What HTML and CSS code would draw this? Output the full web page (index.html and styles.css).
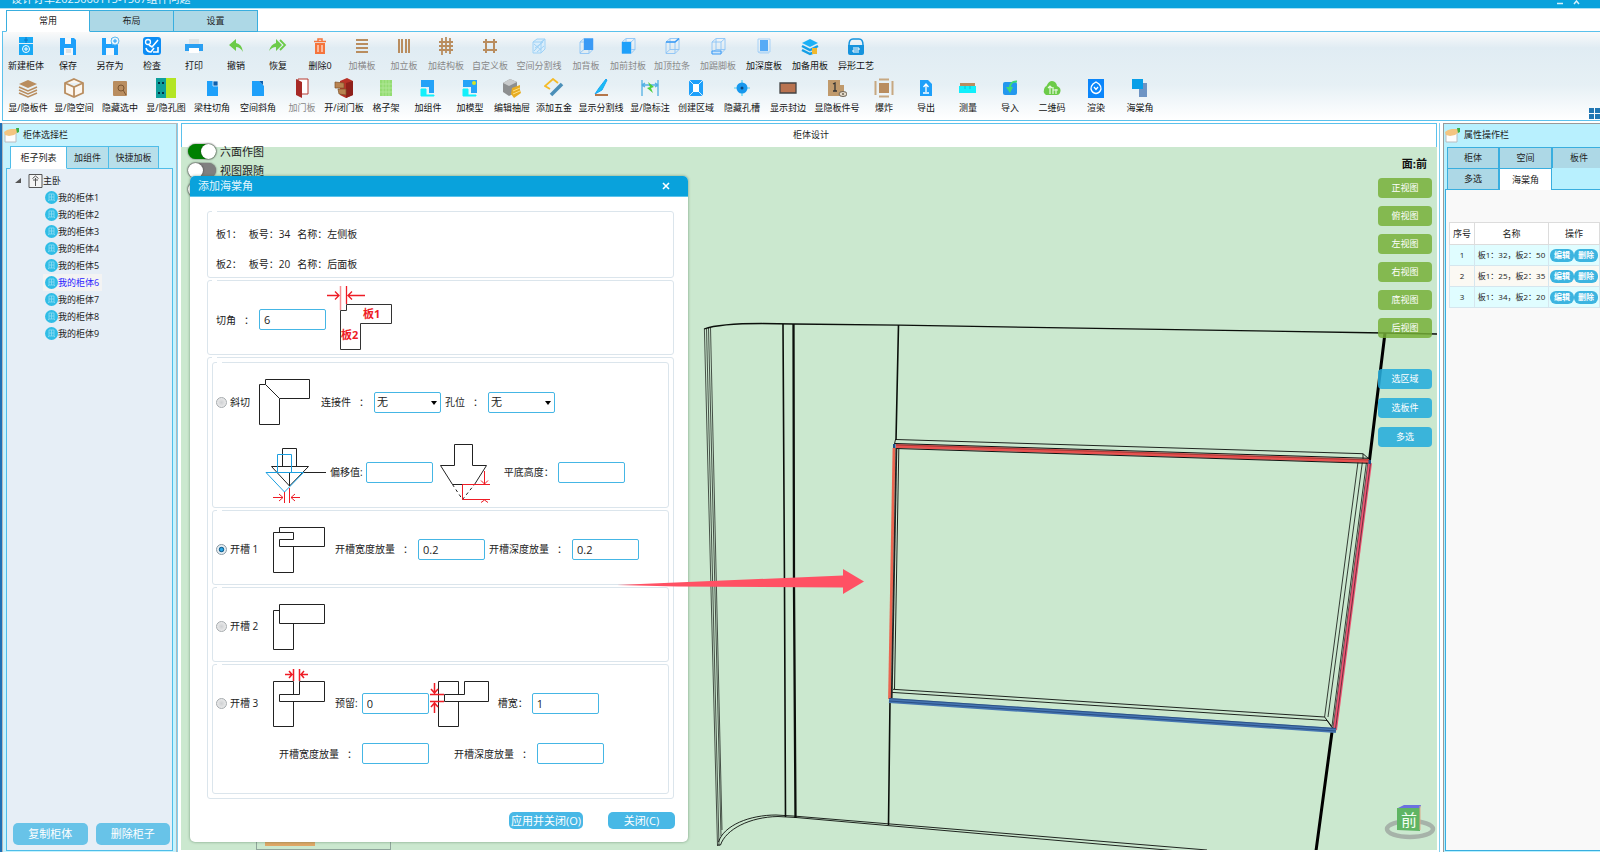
FILE: index.html
```html
<!DOCTYPE html>
<html lang="zh-CN">
<head>
  <meta charset="UTF-8" />
  <meta name="viewport" content="width=device-width, initial-scale=1" />
  <title>柜体设计</title>
  <link rel="stylesheet" href="styles.css">
</head>
<body>
  <header class="titlebar">
    <span>设计订单2025060115-1507组件问题</span>
    <svg class="win-btns" width="26" height="8" viewBox="0 0 26 8"><path d="M0 4.500H6M17 5L19.500 2L22 5" stroke="#d6f1fb" stroke-width="1.500" fill="none"/></svg>
  </header>

  <nav class="ribbon-tabs">
    <button class="active">常用</button>
    <button>布局</button>
    <button>设置</button>
  </nav>

  <section class="ribbon">
    <div class="tools" id="tools-1"></div>
    <div class="tools" id="tools-2"></div>
    <svg class="corner" width="11" height="11" viewBox="0 0 11 11"><path d="M0 0H5V5H0ZM6 0H11V5H6ZM0 6H5V11H0ZM6 6H11V11H6Z" fill="#2277b3"/></svg>
  </section>

  <main class="workspace">
    <aside class="sidebar">
      <h2 class="panel-title">
        <svg width="16" height="16" viewBox="0 0 16 16"><path d="M1 6H12V15H1Z" fill="#fdfdfd" stroke="#b9bcc0"/><path d="M0 5L3 3L7 2L13 2L14 5L10 8L5 9L1 8Z" fill="#f3c581"/><path d="M12 1L15 1V5L13 6Z" fill="#3aae45"/></svg>
        柜体选择栏
      </h2>
      <nav class="side-tabs">
        <button class="active">柜子列表</button>
        <button>加组件</button>
        <button>快捷加板</button>
      </nav>
      <div class="side-body">
        <div class="tree-root">
          <svg width="28" height="14" viewBox="0 0 28 14"><path d="M6 4V9H0Z" fill="#555"/><path d="M14 .500H27V13.500H14Z" fill="#f4f4f4" stroke="#555"/><path d="M20.500 4V12M17.500 4.500L20.500 2L23.500 4.500M18 6H23" stroke="#555" fill="none"/></svg>
          主卧
        </div>
        <ul class="tree" id="tree"></ul>
        <div class="side-actions">
          <button>复制柜体</button>
          <button>删除柜子</button>
        </div>
      </div>
    </aside>

    <section class="design">
      <h2 class="design-title">柜体设计</h2>
      <div class="canvas">
        <svg class="model" viewBox="181 147 1256 703" preserveAspectRatio="xMinYMin slice">
          <g fill="none" stroke="#0b0f0b">
            <g stroke-width="1.300">
              <path d="M704 329C715 325 740 323.500 762 323.500L793 324L899 325.200L1385 333L1438 334"/>
              <path d="M898.500 325L896 440M890 701L888.500 825" stroke-width="1.600"/>
            </g>
            <path d="M783 324L784.500 587L785.500 817" stroke-width="1.600"/>
            <path d="M793.500 324L794 587L795.500 818" stroke-width="2.300"/>
            <path d="M704.400 329L717.500 846M706.500 328.500L719 846M708.500 328L721 836M710.500 327.500L722 830" stroke-width=".7"/>
            <path d="M717.500 845H720.500C726 829 750 817 778 816.500L796 817.500L1178 851M718.500 842C724 825 750 815 776 815L793 816L1207 850" stroke-width=".9"/>
            <path d="M1385 333L1369.500 460M1332 732L1316 851" stroke-width="3" stroke="#000"/>
            <path d="M893.500 448L895.500 439.500L1363 453.700L1369 459L1370 463" stroke-width=".9"/>
            <path d="M1358 462L1324.600 717M1362.400 462L1328 717M1366.500 462L1332 726" stroke-width=".8"/>
            <path d="M898.800 449L894.500 689M893 689.300L1324.600 717L1333 728M892 692.400L1327 720.500L1333 729M1363 454L1363 460" stroke-width=".9"/>
          </g>
          <path d="M896 446L1369 461" stroke="#e85250" stroke-width="4"/>
          <path d="M895 443.500L1369 458.300M896 448.500L1369 463.300" stroke="#111" stroke-width="1"/>
          <path d="M896 445L1369 460" stroke="#8c2f2c" stroke-width=".7"/>
          <path d="M894 448L889.500 699" stroke="#ea6550" stroke-width="2.800"/>
          <path d="M896.400 448L891.700 698" stroke="#222" stroke-width="1.800"/>
          <path d="M1370 463L1335 730" stroke="#ed5573" stroke-width="4"/>
          <path d="M1367.800 463L1332.800 729M1370.500 463L1335.500 729" stroke="#4c2731" stroke-width=".8"/>
          <path d="M889 700.500L1336 730.500" stroke="#4676b2" stroke-width="5"/>
          <path d="M889 698.500L1336 728.500M889 701L1336 731" stroke="#1e3f72" stroke-width=".7"/>
          <path d="M893 444H895.500V448H893ZM1368.500 460H1371V464H1368.500Z" fill="#1f4d86"/>
          <ellipse cx="1410" cy="829" rx="23" ry="8" fill="none" stroke="#a6b3a9" stroke-width="4.500"/>
          <path d="M1398 808L1404 805H1421L1420 808Z" fill="#6b71e0"/>
          <path d="M1397 808H1420V831L1397 830Z" fill="#5fb564"/>
          <path d="M1420 806V830" stroke="#dfa989"/>
          <text x="1401" y="826" class="cube-text">前</text>
        </svg>

        <div class="toggles">
          <label><input type="checkbox" checked> 六面作图</label>
          <label><input type="checkbox"> 视图跟随</label>
          <label><input type="checkbox"></label>
        </div>

        <div class="view-panel">
          <p>面:前</p>
          <div class="views">
            <button>正视图</button>
            <button>俯视图</button>
            <button>左视图</button>
            <button>右视图</button>
            <button>底视图</button>
            <button>后视图</button>
          </div>
          <div class="picks">
            <button>选区域</button>
            <button>选板件</button>
            <button>多选</button>
          </div>
        </div>

        <div class="legend-box"><i></i></div>

        <form class="dialog" onsubmit="return false">
          <div class="dialog-title">
            <span>添加海棠角</span>
            <button type="button" aria-label="关闭"><svg width="8" height="8" viewBox="0 0 8 8"><path d="M1 1L7 7M7 1L1 7" stroke="#fff" stroke-width="1.600"/></svg></button>
          </div>
          <div class="dialog-body">
            <fieldset class="boards">
              <p><span>板1<i class="fw">：</i></span><span>板号<i class="fw">：</i>34</span><span>名称<i class="fw">：</i>左侧板</span></p>
              <p><span>板2<i class="fw">：</i></span><span>板号<i class="fw">：</i>20</span><span>名称<i class="fw">：</i>后面板</span></p>
            </fieldset>

            <fieldset class="cut">
              <label for="cut">切角<i class="fw colon">：</i></label>
              <input type="text" id="cut" value="6">
              <svg width="67" height="69" viewBox="0 2 67 69" fill="none">
                <path d="M14.500 27.500H20.500V21.500H65.500V40.500H34.500V66.500H14.500Z" stroke="#333"/>
                <path d="M14.500 3V27" stroke="#f78d92" stroke-width="1.500"/>
                <path d="M20.500 3V21M1 12.500H13M9 8.500L13 12.500L9 16.500M39 12.500H22M26 8.500L22 12.500L26 16.500" stroke="#ee1c25" stroke-width="1.300"/>
                <text x="37" y="35">板1</text>
                <text x="15" y="56">板2</text>
              </svg>
            </fieldset>

            <fieldset class="modes">
              <fieldset class="mode miter">
                <div class="line">
                  <label class="opt"><input type="radio" name="mode"> 斜切</label>
                  <svg width="57" height="48" viewBox="0 0 57 48" class="ink"><path d="M9.500 6.500V1.500H53.500V20.500H23.500L9.500 6.500H3.500V46.500H23.500V20.500"/></svg>
                  <label class="after-pic" for="joint">连接件<i class="fw colon">：</i></label>
                  <span class="select"><select id="joint"><option>无</option></select></span>
                  <label class="next" for="hole">孔位<i class="fw colon">：</i></label>
                  <span class="select"><select id="hole"><option>无</option></select></span>
                </div>
                <div class="line second">
                  <svg width="61" height="62" viewBox="0 0 61 62" class="ink">
                    <path d="M17.500 25.500V7.500H31.500V25.500M6.500 25.500H43.500L24.500 45L6.500 25.500M24.500 31V45M38 31.500H61"/>
                    <path d="M12.500 31.500V13.500H26.500V31.500M1 31.500H38.500L19.500 51Z" stroke="#1c9fe0"/>
                    <path d="M19.500 51V62M24.500 47V62M8 56.500H18M14 53L18 56.500L14 60M35 56.500H26M30 53L26 56.500L30 60" stroke="#ee1c25"/>
                  </svg>
                  <label class="tight" for="offset">偏移值:</label>
                  <input type="text" id="offset">
                  <svg width="63" height="62" viewBox="-3 0 63 62" class="ink">
                    <path d="M4.500 24.500H18.500V3.500H36.500V24.500H50.500L38.500 43.500M4.500 24.500L16.500 43.500H27"/>
                    <path d="M16.500 43.500L26.500 58.500L38.500 43.500" stroke-dasharray="3 3"/>
                    <path d="M26.500 43.500V58.500H54M26.500 43.500H54M48.500 30V43M45 39.500L48.500 43L52 39.500M45 61.500L48.500 59L52 61.500" stroke="#ee1c25"/>
                  </svg>
                  <label class="after-pic" for="flat">平底高度<i class="fw">：</i></label>
                  <input type="text" id="flat" class="gap">
                </div>
              </fieldset>

              <fieldset class="mode">
                <div class="line">
                  <label class="opt"><input type="radio" name="mode" checked> 开槽 1</label>
                  <svg width="71" height="50" viewBox="0 0 71 50" class="ink"><path d="M23.500 8.500V3.500H68.500V22.500H23.500V15.500H37.500V8.500H17.500V48.500H37.500V22.500"/></svg>
                  <label class="after-pic" for="w1">开槽宽度放量<i class="fw colon">：</i></label>
                  <input type="text" id="w1" value="0.2">
                  <label class="next" for="d1">开槽深度放量<i class="fw colon">：</i></label>
                  <input type="text" id="d1" value="0.2">
                </div>
              </fieldset>

              <fieldset class="mode">
                <div class="line">
                  <label class="opt"><input type="radio" name="mode"> 开槽 2</label>
                  <svg width="71" height="50" viewBox="0 0 71 50" class="ink"><path d="M23.500 3.500H68.500V22.500H23.500ZM23.500 9.500H17.500V48.500H37.500V22.500"/></svg>
                </div>
              </fieldset>

              <fieldset class="mode slot3">
                <div class="line">
                  <label class="opt"><input type="radio" name="mode"> 开槽 3</label>
                  <svg width="71" height="68" viewBox="0 0 71 68" class="ink">
                    <path d="M37.500 25V12.500H17.500V57.500H37.500V32.500M43.500 12.500V25.500H23.500V32.500H68.500V12.500Z"/>
                    <path d="M37.500 0V12M43.500 0V12M29 5.500H36M33 2L36 5.500L33 9M52 5.500H45M48 2L45 5.500L48 9" stroke="#ee1c25" stroke-width="1.500"/>
                  </svg>
                  <label class="after-pic" for="keep">预留:</label>
                  <input type="text" id="keep" class="gap" value="0">
                  <svg width="61" height="68" viewBox="0 0 61 68" class="ink">
                    <path d="M29.500 25V12.500H9.500V57.500H29.500V32.500M35.500 12.500V25.500H15.500V32.500H59.500V12.500Z"/>
                    <path d="M1 25.500H15M1 32.500H15M5.500 14V24M2 20L5.500 24L9 20M5.500 44V34M2 38L5.500 34L9 38" stroke="#ee1c25" stroke-width="1.500"/>
                  </svg>
                  <label class="after-pic" for="slot">槽宽<i class="fw">：</i></label>
                  <input type="text" id="slot" class="gap" value="1">
                </div>
                <div class="line last">
                  <label for="w3">开槽宽度放量<i class="fw colon">：</i></label>
                  <input type="text" id="w3">
                  <label class="far" for="d3">开槽深度放量<i class="fw colon">：</i></label>
                  <input type="text" id="d3">
                </div>
              </fieldset>
            </fieldset>

            <div class="dialog-actions">
              <button type="button">应用并关闭(O)</button>
              <button type="button">关闭(C)</button>
            </div>
          </div>
        </form>

        <svg class="arrow" width="248" height="26" viewBox="0 0 248 26"><path d="M0 16L226 6.500V0L247 12.500L226 25V18.500L60 17.500Z" fill="#ff5164"/></svg>
      </div>
    </section>

    <aside class="props">
      <h2 class="panel-title">
        <svg width="16" height="16" viewBox="0 0 16 16"><path d="M1 6H12V15H1Z" fill="#fdfdfd" stroke="#b9bcc0"/><path d="M0 5L3 3L7 2L13 2L14 5L10 8L5 9L1 8Z" fill="#f3c581"/><path d="M12 1L15 1V5L13 6Z" fill="#3aae45"/></svg>
        属性操作栏
      </h2>
      <nav class="prop-tabs">
        <button>柜体</button>
        <button>空间</button>
        <button>板件</button>
        <button>多选</button>
        <button class="active">海棠角</button>
      </nav>
      <div class="props-body">
        <table>
          <thead>
            <tr><th class="no">序号</th><th>名称</th><th class="ops">操作</th></tr>
          </thead>
          <tbody>
            <tr><td>1</td><td>板1<i class="fw">：</i>32<i class="fw">，</i>板2<i class="fw">：</i>50</td><td><button>编辑</button><button>删除</button></td></tr>
            <tr><td>2</td><td>板1<i class="fw">：</i>25<i class="fw">，</i>板2<i class="fw">：</i>35</td><td><button>编辑</button><button>删除</button></td></tr>
            <tr><td>3</td><td>板1<i class="fw">：</i>34<i class="fw">，</i>板2<i class="fw">：</i>20</td><td><button>编辑</button><button>删除</button></td></tr>
          </tbody>
        </table>
      </div>
    </aside>
  </main>

  <script src="app.js"></script>
</body>
</html>
```

FILE: styles.css
```css
* {
  box-sizing: border-box;
  margin: 0;
  padding: 0;
}

body {
  height: 100vh;
  display: flex;
  flex-direction: column;
  overflow: hidden;
  background: #fff;
  color: #222;
  font-family: "Open Sans", "Noto Sans CJK SC", sans-serif;
  font-size: 9px;
  line-height: 12px;
}

button,
input,
select {
  font: inherit;
  color: inherit;
  border: none;
  background: none;
}

button {
  cursor: pointer;
  white-space: nowrap;
}

svg {
  display: block;
  flex-shrink: 0;
}

h2 {
  font-size: 9px;
  font-weight: normal;
}

/* centred full-width punctuation */
.fw {
  font-family: "Noto Sans CJK TC", sans-serif;
  font-style: normal;
}

/* title bar */
.titlebar {
  height: 9px;
  flex-shrink: 0;
  display: flex;
  justify-content: space-between;
  align-items: flex-end;
  padding: 0 17px 3px 11px;
  overflow: hidden;
  background: #09a2dc;
  border-bottom: 1px solid #a9e2f6;
  color: #e4f6fd;
  font-size: 11px;
}

.win-btns {
  margin-bottom: -2px;
}

/* ribbon */
.ribbon-tabs {
  display: flex;
  margin-left: 6px;
  padding-top: 1px;
  position: relative;
  z-index: 1;
  margin-bottom: -1px;
}

.ribbon-tabs button {
  width: 84px;
  height: 22px;
  background: #add8e6;
  border: 1px solid #39aedf;
  border-left-width: 0;
}

.ribbon-tabs .active {
  background: #fff;
  border-left-width: 1px;
  border-bottom-color: #fff;
}

.ribbon {
  position: relative;
  flex-shrink: 0;
  margin-left: 2px;
  height: 90px;
  padding: 4px 0 0 2px;
  border: solid #5bc1ec;
  border-width: 1px 0 1px 1px;
  background: linear-gradient(#fafafa, #e0ecf3 18%, #e6f0f5 60%, #fff);
}

.tools {
  display: flex;
  height: 42px;
}

.tools button {
  width: 42px;
  display: flex;
  flex-direction: column;
  align-items: center;
  gap: 4px;
  color: #111;
}

.tools .wide {
  width: 46px;
}

.tools .xwide {
  width: 52px;
}

.tools .off {
  color: #888;
}

.corner {
  position: absolute;
  right: 0;
  bottom: 1px;
}

/* workspace */
.workspace {
  flex: 1;
  min-height: 0;
  display: flex;
  margin-top: 2px;
  border-left: 2px solid #1f70b5;
}

.panel-title {
  height: 22px;
  display: flex;
  align-items: center;
  gap: 3px;
  padding-left: 1px;
}

.sidebar {
  width: 175px;
  display: flex;
  flex-direction: column;
  background: #c5f3fe;
  border: solid #b4b8bc;
  border-width: 1px 1px 0 1px;
}

.side-tabs {
  display: flex;
  margin: 0 0 -1px 7px;
  position: relative;
}

.side-tabs button {
  width: 42px;
  height: 23px;
  background: #b8dfea;
  border: 1px solid #4fbde9;
  border-left-width: 0;
}

.side-tabs button:last-child {
  width: 50px;
}

.side-tabs .active {
  width: 57px;
  background: #fff;
  border-left-width: 1px;
  border-bottom-color: #fff;
}

.side-body {
  flex: 1;
  display: flex;
  flex-direction: column;
  margin: 0 3px 1px;
  padding-top: 4px;
  background: #e6eef6;
  border: 1px solid #4fbde9;
}

.tree-root {
  display: flex;
  align-items: center;
  height: 16px;
  padding-left: 8px;
}

.tree {
  list-style: none;
  flex: 1;
  padding-left: 36px;
}

.tree li {
  display: flex;
  align-items: center;
  width: 59px;
  height: 17px;
  padding-left: 2px;
}

.tree .selected {
  background: #f3f3f3;
  color: #2a20ff;
}

.side-actions {
  display: flex;
  gap: 8px;
  padding: 0 2px 5px 6px;
}

.side-actions button {
  flex: 1;
  height: 22px;
  border-radius: 5px;
  background: #68c3e8;
  color: #fff;
  font-size: 11px;
}

/* design area */
.design {
  flex: 1;
  min-width: 0;
  display: flex;
  flex-direction: column;
  padding: 0 2px 2px 3px;
  margin-right: 3px;
  border: solid #7fcff0;
  border-width: 0 1px;
}

.design-title {
  height: 24px;
  line-height: 21px;
  flex-shrink: 0;
  padding-left: 4px;
  text-align: center;
  background: #fff;
  border: 1px solid #5bc1ec;
  border-bottom: none;
}

.canvas {
  flex: 1;
  min-height: 0;
  position: relative;
  background: #cbe8cf;
}

.model {
  position: absolute;
  inset: 0;
  width: 100%;
  height: 100%;
}

.cube-text {
  font-size: 16px;
  fill: #f2fff2;
}

.toggles {
  position: absolute;
  left: 7px;
  top: -5px;
}

.toggles label {
  display: flex;
  align-items: center;
  gap: 4px;
  height: 19px;
  font-size: 11px;
}

.toggles input {
  appearance: none;
  width: 28px;
  height: 15px;
  border-radius: 8px;
  background: #808080;
  box-shadow: 0 0 2px #444;
}

.toggles input::before {
  content: "";
  display: block;
  width: 15px;
  height: 15px;
  border-radius: 50%;
  background: #fff;
  box-shadow: 0 0 2px #333;
}

.toggles input:checked {
  background: #008000;
}

.toggles input:checked::before {
  margin-left: 13px;
}

.view-panel {
  position: absolute;
  top: 9px;
  right: 5px;
  width: 54px;
}

.view-panel p {
  padding-right: 5px;
  text-align: right;
  font-size: 11px;
  line-height: 16px;
  font-weight: bold;
  color: #111;
}

.views,
.picks {
  display: flex;
  flex-direction: column;
  gap: 8px;
  padding-top: 6px;
}

.picks {
  gap: 9px;
  padding-top: 31px;
}

.view-panel button {
  height: 20px;
  border-radius: 4px;
  background: rgba(118, 175, 56, 0.84);
  color: #fff;
}

.view-panel .picks button {
  background: rgba(38, 172, 220, 0.88);
}

.legend-box {
  position: absolute;
  left: 75px;
  bottom: 0;
  width: 135px;
  height: 40px;
  padding: 30px 0 0 8px;
  border: 1px solid #8fa59b;
}

.legend-box i {
  display: block;
  width: 50px;
  height: 5px;
  background: #dfa766;
}

.arrow {
  position: absolute;
  left: 436px;
  top: 422px;
}

/* dialog */
.dialog {
  position: absolute;
  left: 9px;
  top: 29px;
  width: 498px;
  background: #fff;
  border-radius: 5px;
  box-shadow: 0 0 3px rgba(60, 100, 70, 0.6);
  font-size: 10px;
}

.dialog-title {
  display: flex;
  justify-content: space-between;
  align-items: center;
  height: 21px;
  padding: 0 18px 0 8px;
  background: #09a2dc;
  border-bottom: 1px solid #5cc3ec;
  border-radius: 5px 5px 0 0;
  color: #e4f6fd;
  font-size: 11px;
}

.dialog-body {
  display: flex;
  flex-direction: column;
  gap: 2px;
  padding: 14px 14px 13px 17px;
}

fieldset {
  position: relative;
  min-width: 0;
  border: 1px solid #dbe5ec;
  border-radius: 3px;
}

fieldset::before {
  content: "";
  position: absolute;
  left: 4px;
  top: -1px;
  width: 5px;
  height: 1px;
  background: #fff;
}

fieldset label {
  white-space: nowrap;
}

.boards {
  height: 67px;
  padding: 7px 8px;
}

.boards p {
  display: flex;
  gap: 7px;
  line-height: 30px;
}

.cut {
  display: flex;
  align-items: center;
  height: 75px;
  padding: 4px 0 0 8px;
}

.cut text {
  font-size: 11px;
  font-weight: bold;
  fill: #ee1c25;
}

.colon {
  margin: 0 5px 0 8px;
}

fieldset input[type="text"],
.select select {
  width: 67px;
  height: 21px;
  padding: 0 4px;
  border: 1px solid #45b6e5;
  border-radius: 2px;
  background: #fff;
  font-size: 11px;
}

.select {
  position: relative;
}

.select select {
  display: block;
  appearance: none;
  padding: 0 2px;
}

.select::after {
  content: "";
  position: absolute;
  right: 4px;
  top: 9px;
  border: 3px solid transparent;
  border-top: 4px solid #000;
  pointer-events: none;
}

.modes {
  display: flex;
  flex-direction: column;
  gap: 2px;
  padding: 4px;
}

.mode {
  padding-left: 3px;
  height: 75px;
}

.line {
  display: flex;
  align-items: center;
  height: 76px;
}

.miter {
  height: 146px;
}

.miter .line {
  height: 78px;
}

.miter .second {
  height: 62px;
  padding-left: 49px;
}

.slot3 {
  height: 130px;
}

.slot3 .last {
  height: 25px;
  padding-left: 63px;
}

.ink {
  fill: none;
  stroke: #222;
}

.opt {
  display: flex;
  align-items: center;
  gap: 3px;
  width: 40px;
}

.opt input {
  appearance: none;
  width: 11px;
  height: 11px;
  flex-shrink: 0;
  border: 1px solid #a6abae;
  border-radius: 50%;
  background: radial-gradient(#cfd1d3, #f4f4f4);
}

.opt input:checked {
  border-color: #8a9aa5;
  background: radial-gradient(#2cabec 15%, #17618f 36%, #e6eef3 50%);
}

.after-pic {
  margin-left: 8px;
}

.next,
.tight {
  margin-left: 4px;
}

.tight {
  margin-right: 3px;
}

.gap {
  margin-left: 4px;
}

.far {
  margin-left: 25px;
}

.dialog-actions {
  display: flex;
  justify-content: flex-end;
  gap: 25px;
  margin: 11px -1px 0 0;
}

.dialog-actions button {
  min-width: 67px;
  height: 17px;
  padding: 0 2px;
  border-radius: 5px;
  background: #48b8e6;
  color: #fff;
  font-size: 11px;
}

/* properties */
.props {
  width: 157px;
  flex-shrink: 0;
  display: flex;
  flex-direction: column;
  overflow: hidden;
  background: #b8f0fe;
  border: solid #999;
  border-width: 1px 0 0 1px;
}

.prop-tabs {
  display: grid;
  grid-template-columns: 52px 53px 54px;
  margin: 1px -10px -1px 3px;
  position: relative;
}

.prop-tabs button {
  height: 21px;
  background: #add8e6;
  border: 1px solid #39aedf;
  border-width: 1px 1px 0 1px;
}

.prop-tabs .active {
  height: 22px;
  background: #fff;
}

.props-body {
  flex: 1;
  margin: 0 0 1px 1px;
  padding: 32px 0 0 3px;
  background: #f9f9f9;
  border: solid #39aedf;
  border-width: 1px 0 1px 1px;
}

table {
  width: 100%;
  border-collapse: collapse;
  table-layout: fixed;
  text-align: center;
}

th {
  height: 22px;
  background: #fff;
  border: 1px solid #dcdcdc;
  font-weight: normal;
}

td {
  height: 21px;
  border: 1px solid #d5e6ee;
  background: #e0fdff;
  font-size: 8px;
  white-space: nowrap;
}

tr:nth-child(even) td {
  background: #fbf9f3;
}

.no {
  width: 25px;
}

.ops {
  width: 51px;
}

td button {
  width: 24px;
  height: 13px;
  border-radius: 6px;
  background: #3cb4e0;
  color: #fff;
  font-weight: bold;
}
```

FILE: app.js
```js
const B = '#1ea0fa';
const W = '#b98d5f';

// cube outline shared by the "add board" icons
const cube = '<path d="M4 6L8 2.500H17V13.500L13 17.500H4ZM4 6H13V17.500M13 6L17 2.500M8 3V13.500H17M8 13.500L4 17" fill="none" stroke="#8cc4f6" stroke-width=".9"/>';

// [label, size class, svg body]
const row1 = [
  ['新建柜体', '', `<path d="M3 1H17V7H3ZM3 8H17V19H3Z" fill="#19a9f5"/><path d="M10 1V7M8 4H12" stroke="#0c79c4"/><circle cx="10" cy="13" r="3.500" fill="none" stroke="#fff"/><path d="M8 13H12M10 11V15" stroke="#fff"/>`],
  ['保存', '', `<path d="M2 2H16L18 4V19H2Z" fill="${B}"/><path d="M7 2H13V8H7ZM6 12H15V19H6Z" fill="#f4f8fb"/><path d="M8 14H13M8 16H13" stroke="#c5ccd1"/>`],
  ['另存为', '', `<path d="M2 2H14L18 8V19H2Z" fill="${B}"/><path d="M6 2H11V8H6ZM6 12H14V19H6Z" fill="#f4f8fb"/><circle cx="15" cy="5" r="4" fill="#e8f5fd" stroke="#61b9f0"/><path d="M13 5H17M15 3V7" stroke="${B}"/>`],
  ['检查', '', `<rect x="1" y="1" width="18" height="18" rx="3" fill="#0d8df5"/><circle cx="6" cy="6" r="2.500" fill="none" stroke="#fff" stroke-width="1.300"/><path d="M7 9L10 11L16 4M4 12Q5 16 9 16L12 12M11 16H16V11" stroke="#fff" stroke-width="1.600" fill="none"/>`],
  ['打印', '', `<path d="M5 3H15V8H5Z" fill="#dfe4e7"/><path d="M1 8H19V15H1Z" fill="#2a9ff2"/><path d="M5 12H15V17H5Z" fill="#fff"/>`],
  ['撤销', '', `<path d="M3 9L10 3V7Q16 8 17 16Q14 11 10 11V15Z" fill="#6ccb49"/>`],
  ['恢复', '', `<path d="M1 15Q3 8 8 7V3L14 9L8 15V11Q4 11 1 15Z" fill="#6ccb49"/><path d="M12 4L17 9L12 14" stroke="#6ccb49" stroke-width="1.800" fill="none"/>`],
  ['删除0', '', `<path d="M5 7H15V18H5Z" fill="#f5743c"/><path d="M4 5.500H16M8 5V3H12V5" stroke="#f5743c" stroke-width="1.500" fill="none"/><path d="M8 9V16M12 9V16" stroke="#fff"/>`],
  ['加横板', 'off', `<path d="M4 4H16M4 8H16M4 12H16M4 16H16" stroke="${W}" stroke-width="2"/>`],
  ['加立板', 'off', `<path d="M5 3V17M8 3V17M12 3V17M15 3V17" stroke="${W}" stroke-width="2"/>`],
  ['加结构板', 'off', `<path d="M6 2V19M10 1V17M14 2V18M3 6H17M3 10H17M3 14H17" stroke="${W}" stroke-width="1.800"/>`],
  ['自定义板', 'wide off', `<path d="M6 3V17M14 3V17M3 6H17M3 14H17" stroke="${W}" stroke-width="2"/>`],
  ['空间分割线', 'xwide off', `<path d="M4 6L8 3H16V13L12 17H4ZM4 6H12V17M12 6L16 3M5 15L15 4M5 8L12 14" stroke="#9fd2f6" fill="#d9edfb"/><path d="M6 12L14 6M8 16L15 10" stroke="#9fd2f6"/>`],
  ['加背板', 'off', cube + `<path d="M8 2.500H17V14H8Z" fill="#3a9af5"/>`],
  ['加前封板', 'off', cube + `<path d="M4 6H13V17.500H4Z" fill="${B}"/>`],
  ['加顶拉条', 'wide off', cube + `<path d="M4 6H13L17 2.500" stroke="#3a9af5" stroke-width="1.600" fill="none"/>`],
  ['加踢脚板', 'wide off', cube + `<path d="M4 15H13V18H4Z" fill="#cbe5fb" stroke="#3a9af5"/>`],
  ['加深度板', 'wide', `<path d="M6 4H14V15H6Z" fill="#57abf6"/><path d="M4 3H16V16H4Z" fill="none" stroke="#a8d2f7"/><path d="M4 16L6 17H15" stroke="#a8d2f7" fill="none"/>`],
  ['加备用板', 'wide', `<path d="M2 7L10 3L18 7L10 11Z" fill="#1cb0f6"/><path d="M2 10L10 14L18 10M2 14L10 18L15 16" stroke="#149fe6" stroke-width="2.500" fill="none"/><path d="M12 12H17V18H12Z" fill="#f1b92f"/>`],
  ['异形工艺', 'wide', `<path d="M3 9Q3 3 7 3H13Q17 3 17 9" fill="none" stroke="#1593dd" stroke-width="1.500"/><path d="M2 9H18V17Q18 19 16 19H4Q2 19 2 17Z" fill="#1593dd"/><path d="M7 12H13V14H7V16H13" stroke="#fff" fill="none"/>`]
];

const row2 = [
  ['显/隐板件', 'wide', `<path d="M1 6L10 2L19 6L10 10Z" fill="${W}"/><path d="M1 9L10 13L19 9M1 12L10 16L19 12M1 15L10 19L19 15" stroke="${W}" stroke-width="1.500" fill="none"/>`],
  ['显/隐空间', 'wide', `<path d="M10 1L19 5V15L10 19L1 15V5ZM1 5L10 9L19 5M10 9V19" stroke="${W}" stroke-width="1.800" fill="#fbf6ef"/>`],
  ['隐藏选中', 'wide', `<rect x="3" y="3" width="14" height="15" rx="1" fill="${W}"/><circle cx="11" cy="10" r="3" fill="none" stroke="#7b5531"/><path d="M13 12L16 17" stroke="#7b5531"/>`],
  ['显/隐孔图', 'wide', `<path d="M0 0H10V20H0Z" fill="#0e9f9c"/><path d="M10 0H20V20H10Z" fill="#b3e524"/><path d="M2 5H4M6 5H8M2 15H4M6 15H8" stroke="#034" stroke-width="2"/>`],
  ['梁柱切角', 'wide', `<path d="M5 3H16V18H5Z" fill="${B}"/><path d="M11 3H16V8H11Z" fill="#0d5fae" stroke="#dff1fd" stroke-width=".8"/>`],
  ['空间斜角', 'wide', `<path d="M4 3H11L16 8V18H4Z" fill="${B}"/><path d="M11 3H15V7Z" fill="#0d5fae"/>`],
  ['加门板', 'off', `<path d="M6 1H16V16H6Z" fill="#fff" stroke="#b63b33"/><path d="M4 1L10 4V20L4 17Z" fill="#a72a26"/>`],
  ['开/闭门板', '', `<path d="M6 3L13 0L19 3V17L12 20L6 17Z" fill="#b83127"/><path d="M12 5L19 3V17L12 20Z" fill="#8f211b"/><path d="M1 4L10 5V10H1ZM4 11L12 11V17L5 16Z" fill="#b98350" stroke="#7e5028" stroke-width=".7"/>`],
  ['格子架', '', `<path d="M4 2H16V18H4Z" fill="#93dc72"/><path d="M4 6H16M4 10H16M4 14H16M7 2V18M10 2V18M13 2V18" stroke="#b4e89c" stroke-width=".8"/>`],
  ['加组件', '', `<path d="M3 2H16V15H11V9H3Z" fill="#24a2f8"/><path d="M3 11H8V17H16V18H3Z" fill="#13f0fb" stroke="#13f0fb"/>`],
  ['加模型', '', `<path d="M3 2H17V15H11V9H3Z" fill="#24a2f8"/><path d="M3 11H8V17H16V18H3Z" fill="#13f0fb" stroke="#13f0fb"/><circle cx="14" cy="5" r="2" fill="#d5e324"/>`],
  ['编辑抽屉', '', `<path d="M1 5L8 1L15 4V14L7 18L1 14Z" fill="#8d8f90"/><path d="M1 5L8 1L15 4L7 8Z" fill="#c9cbcc"/><path d="M10 10L18 7V12L19 15L12 20L9 16Z" fill="#e8ad22"/><path d="M11 13L18 10M11 16L18 13" stroke="#fce08a"/>`],
  ['添加五金', '', `<path d="M6 11L1 8L9 1L14 5" stroke="#f4bb28" stroke-width="1.800" fill="none"/><path d="M7 17L18 6" stroke="#4b8fb8" stroke-width="3.500"/>`],
  ['显示分割线', 'xwide', `<path d="M15 1L8 10L4 16L11 12L16 2Z" fill="#19bff4" stroke="#19a5f4"/><path d="M4 17H17" stroke="#b5764a" stroke-width="2"/>`],
  ['显/隐标注', 'wide', `<path d="M2 2V18M18 2V18M2 7H18M5 5L2 7L5 9M15 5L18 7L15 9" stroke="#51b0e4" stroke-width="1.300" fill="none"/><path d="M8 4L14 9L11 10L13 15L7 10L10 9Z" fill="#4dcf3e"/>`],
  ['创建区域', 'wide', `<rect x="3" y="2" width="14" height="16" rx="2" fill="${B}"/><path d="M7 6H13V14H7Z" fill="#fff"/><path d="M3 2L7 6M17 2L13 6M3 18L7 14M17 18L13 14" stroke="#d3edfd"/>`],
  ['隐藏孔槽', 'wide', `<path d="M10 2V18M2 10H18" stroke="#4fd1f4" stroke-width="1.200"/><circle cx="10" cy="10" r="5.500" fill="#1798ee"/><circle cx="10" cy="10" r="1.500" fill="#0b477f"/>`],
  ['显示封边', 'wide', `<path d="M2 5H18V15H2Z" fill="#b97350" stroke="#444" stroke-width="1.300"/>`],
  ['显隐板件号', 'xwide', `<path d="M1 2H13V7H17V18H1Z" fill="#c09a6c"/><path d="M6 6L8 5V13M6 13H10" stroke="#333" stroke-width="1.300" fill="none"/><ellipse cx="16" cy="16" rx="4" ry="2.500" fill="#e5dccb" stroke="#6d6355"/><circle cx="16" cy="16" r="1" fill="#6d6355"/>`],
  ['爆炸', '', `<path d="M5 5H15V15H5Z" fill="${W}"/><path d="M5 1.500H15M5 18.500H15M1.500 3V17M18.500 3V17" stroke="#c7a881" stroke-width="2"/>`],
  ['导出', '', `<path d="M4 2H12L16 6V18H4Z" fill="${B}"/><path d="M10 14V6M7.500 9L10 6L12.500 9M7 15H13" stroke="#fff" stroke-width="1.300" fill="none"/>`],
  ['测量', '', `<path d="M2 5H17V9H2Z" fill="#b98d5f"/><path d="M1 8H18V15H1Z" fill="#10effb"/><path d="M7 8V11M12 8V11" stroke="#0bbfd0"/>`],
  ['导入', '', `<rect x="3" y="4" width="14" height="13" rx="2" fill="#2398ee"/><path d="M17 3.500Q10 3 10 10" stroke="#3fdc72" stroke-width="2" fill="none"/><path d="M6 9H13L10 15Z" fill="#3fdc72"/>`],
  ['二维码', '', `<path d="M4 17Q0 14 3 9Q5 8 5 7Q8 1 13 4Q15 6 15 8Q20 10 18 15Q17 17 15 17Z" fill="#6ccb49"/><path d="M8 16V8M6 10L8 8L10 10M11 9V16M14 11V16M11 12H16" stroke="#e7f8e0" stroke-width="1.200" fill="none"/>`],
  ['渲染', 'wide', `<path d="M2 1H18V20H2Z" fill="#0b86fb"/><path d="M10 4L13 6Q15 8 15 11Q14 15 10 15.500Q6 15 5 11Q5 8 7 6ZM8 9L10 11.500L12 9" stroke="#fff" stroke-width="1.300" fill="none"/>`],
  ['海棠角', '', `<path d="M9 8L12 5H17V19H9Z" fill="#6e94c4"/><path d="M2 1H13V11H2Z" fill="#079fe8"/>`]
];

function renderTools(id, list) {
  document.getElementById(id).innerHTML = list.map(([label, cls, icon]) => `
    <button class="${cls}">
      <svg width="20" height="20" viewBox="0 0 20 20">${icon}</svg>
      <span>${label}</span>
    </button>`).join('');
}

renderTools('tools-1', row1);
renderTools('tools-2', row2);

const tree = document.getElementById('tree');
for (let i = 1; i <= 9; i++) {
  const li = document.createElement('li');
  if (i === 6) li.className = 'selected';
  li.innerHTML = `
    <svg width="13" height="13" viewBox="0 0 13 13"><circle cx="6.500" cy="6.500" r="6.500" fill="#30bde6"/><path d="M4 3H9V9H4ZM4 6H9M6.500 3V9M3 10L4 9M10 10L9 9" fill="none" stroke="#8fdcf2" stroke-width=".8"/></svg>
    我的柜体${i}`;
  tree.appendChild(li);
}
```
